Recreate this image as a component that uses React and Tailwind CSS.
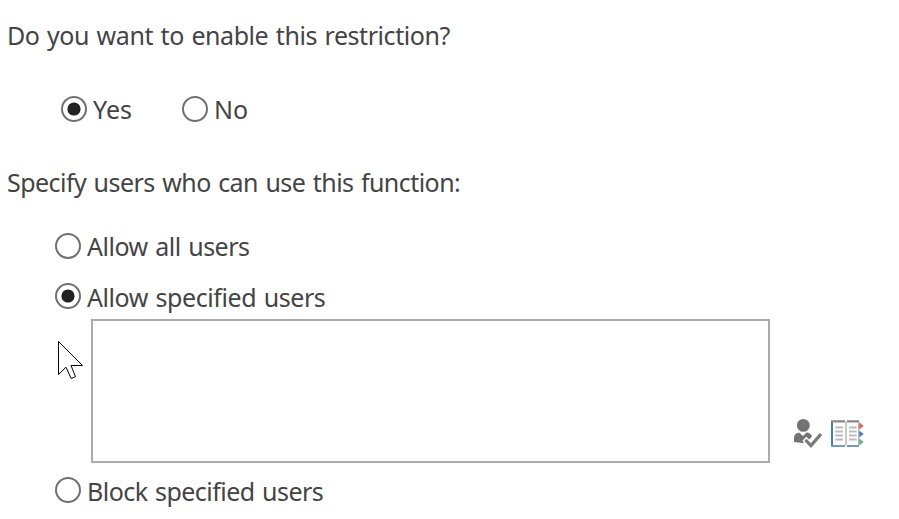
import React, { useState } from 'react';
import clsx from 'clsx';

const Radio = ({ label, checked, onSelect, className, circleClassName, textClassName }) => (
    <button
        type="button"
        role="radio"
        aria-checked={checked}
        onClick={onSelect}
        className={clsx('flex h-9 items-center whitespace-nowrap', className)}
    >
        <span
            className={clsx(
                'flex h-[26px] w-[26px] shrink-0 items-center justify-center rounded-full border-2 border-[#707070] bg-white',
                circleClassName
            )}
        >
            {checked && (
                <svg viewBox="0 0 14 14" className="h-3.5 w-3.5">
                    <circle cx="7" cy="7" r="6.6" fill="#222" />
                </svg>
            )}
        </span>
        <span className={clsx('ml-1.5', textClassName)}>{label}</span>
    </button>
);

const CheckNamesIcon = () => (
    <svg viewBox="0 0 30 30" className="h-[30px] w-[30px]">
        <circle cx="10.3" cy="7.4" r="6.4" fill="#737373" />
        <path d="M1 24V19.8Q1 15.2 6 14.4L10 18L13.5 14.4Q17.8 14.7 19 18.4L16.2 21.4L13.3 18.7L9.5 22.7L11.2 25.2Z" fill="#737373" />
        <path d="M12.4 21.9L18 27.6L28 16" fill="none" stroke="#7b7b7b" strokeWidth="3.3" />
    </svg>
);

const AddressBookIcon = () => (
    <svg viewBox="0 0 33 29" className="h-[29px] w-[33px]">
        <path d="M28 3.2L32.8 7L28 10.8Z" fill="#e0694a" />
        <path d="M28 11.4L32.8 15L28 18.6Z" fill="#4d80bd" />
        <path d="M28 19.4L32.8 23L28 26.6Z" fill="#65b08b" />
        <path d="M1 2H14.3V26H1ZM15.7 2H28V26H15.7Z" fill="#fff" />
        <path d="M0 2H2V27.5H0Z" fill="#477db9" />
        <path d="M1 26H14V28H1ZM16 26H28V28H16Z" fill="#6e9bcb" />
        <path d="M0 1.2H14V3.4H0ZM16 1.2H28V3.4H16Z" fill="#898989" />
        <path d="M14 2.5H16V26.5H14Z" fill="#c8c8c8" />
        <path d="M27 3H28.3V26H27Z" fill="#b5b5b5" />
        <path
            d="M4.3 8.5H12M4.3 12.5H12M4.3 16.5H12M4.3 20.5H12M18 8.5H25.7M18 12.5H25.7M18 16.5H25.7M18 20.5H25.7"
            stroke="#bcbcbc"
            strokeWidth="2"
        />
    </svg>
);

const Pointer = () => (
    <svg viewBox="0 0 27 40" className="pointer-events-none absolute top-[341px] left-[58px] h-10 w-[27px]">
        <path
            d="M.5 .5V33.5L8 26.2L13.2 37.5L17.5 35.7L13 24.5H24.5Z"
            fill="#fff"
            stroke="#000"
            strokeWidth="1"
        />
    </svg>
);

const App = () => {
    const [enabled, setEnabled] = useState(true);
    const [scope, setScope] = useState('allow');
    const [users, setUsers] = useState('');

    return (
        <main className="relative h-[519px] w-[899px] overflow-hidden bg-white pt-[17px] font-['Noto_Sans','Open_Sans',sans-serif] text-[25px] leading-9 [word-spacing:1.5px] text-[#444]">
            <h2 className="ml-[7px] tracking-[-0.44px] whitespace-nowrap">Do you want to enable this restriction?</h2>

            <div role="radiogroup" className="mt-[38px] ml-[61px] flex">
                <Radio label="Yes" checked={enabled} onSelect={() => setEnabled(true)} className="w-[121px]" />
                <Radio label="No" checked={!enabled} onSelect={() => setEnabled(false)} />
            </div>

            <h2 className="mt-[37px] ml-[7px] tracking-[-0.55px] whitespace-nowrap">
                Specify users who can use this function:
            </h2>

            <div role="radiogroup" className="mt-7 ml-[55px] [word-spacing:1.5px]">
                <Radio
                    label="Allow all users"
                    checked={scope === 'all'}
                    onSelect={() => setScope('all')}
                    textClassName="tracking-[-0.49px] [word-spacing:1.5px]"
                />
                <Radio
                    label="Allow specified users"
                    checked={scope === 'allow'}
                    onSelect={() => setScope('allow')}
                    className="mt-[15px]"
                    circleClassName="mb-0.5"
                    textClassName="tracking-[-0.43px] [word-spacing:1.5px]"
                />
                <div className="mt-1 ml-9 flex items-end">
                    <textarea
                        value={users}
                        onChange={(e) => setUsers(e.target.value)}
                        className="block h-36 w-[679px] resize-none border-2 border-[#ababab] bg-white px-2 outline-none"
                    />
                    <div className="mb-[15px] ml-[23px] flex items-end gap-2">
                        <button type="button" aria-label="Check names">
                            <CheckNamesIcon />
                        </button>
                        <button type="button" aria-label="Browse">
                            <AddressBookIcon />
                        </button>
                    </div>
                </div>
                <Radio
                    label="Block specified users"
                    checked={scope === 'block'}
                    onSelect={() => setScope('block')}
                    className="mt-2.5"
                    circleClassName="mb-0.5"
                    textClassName="tracking-[-0.53px] [word-spacing:1.5px]"
                />
            </div>

            <Pointer />
        </main>
    );
};

export default App;
